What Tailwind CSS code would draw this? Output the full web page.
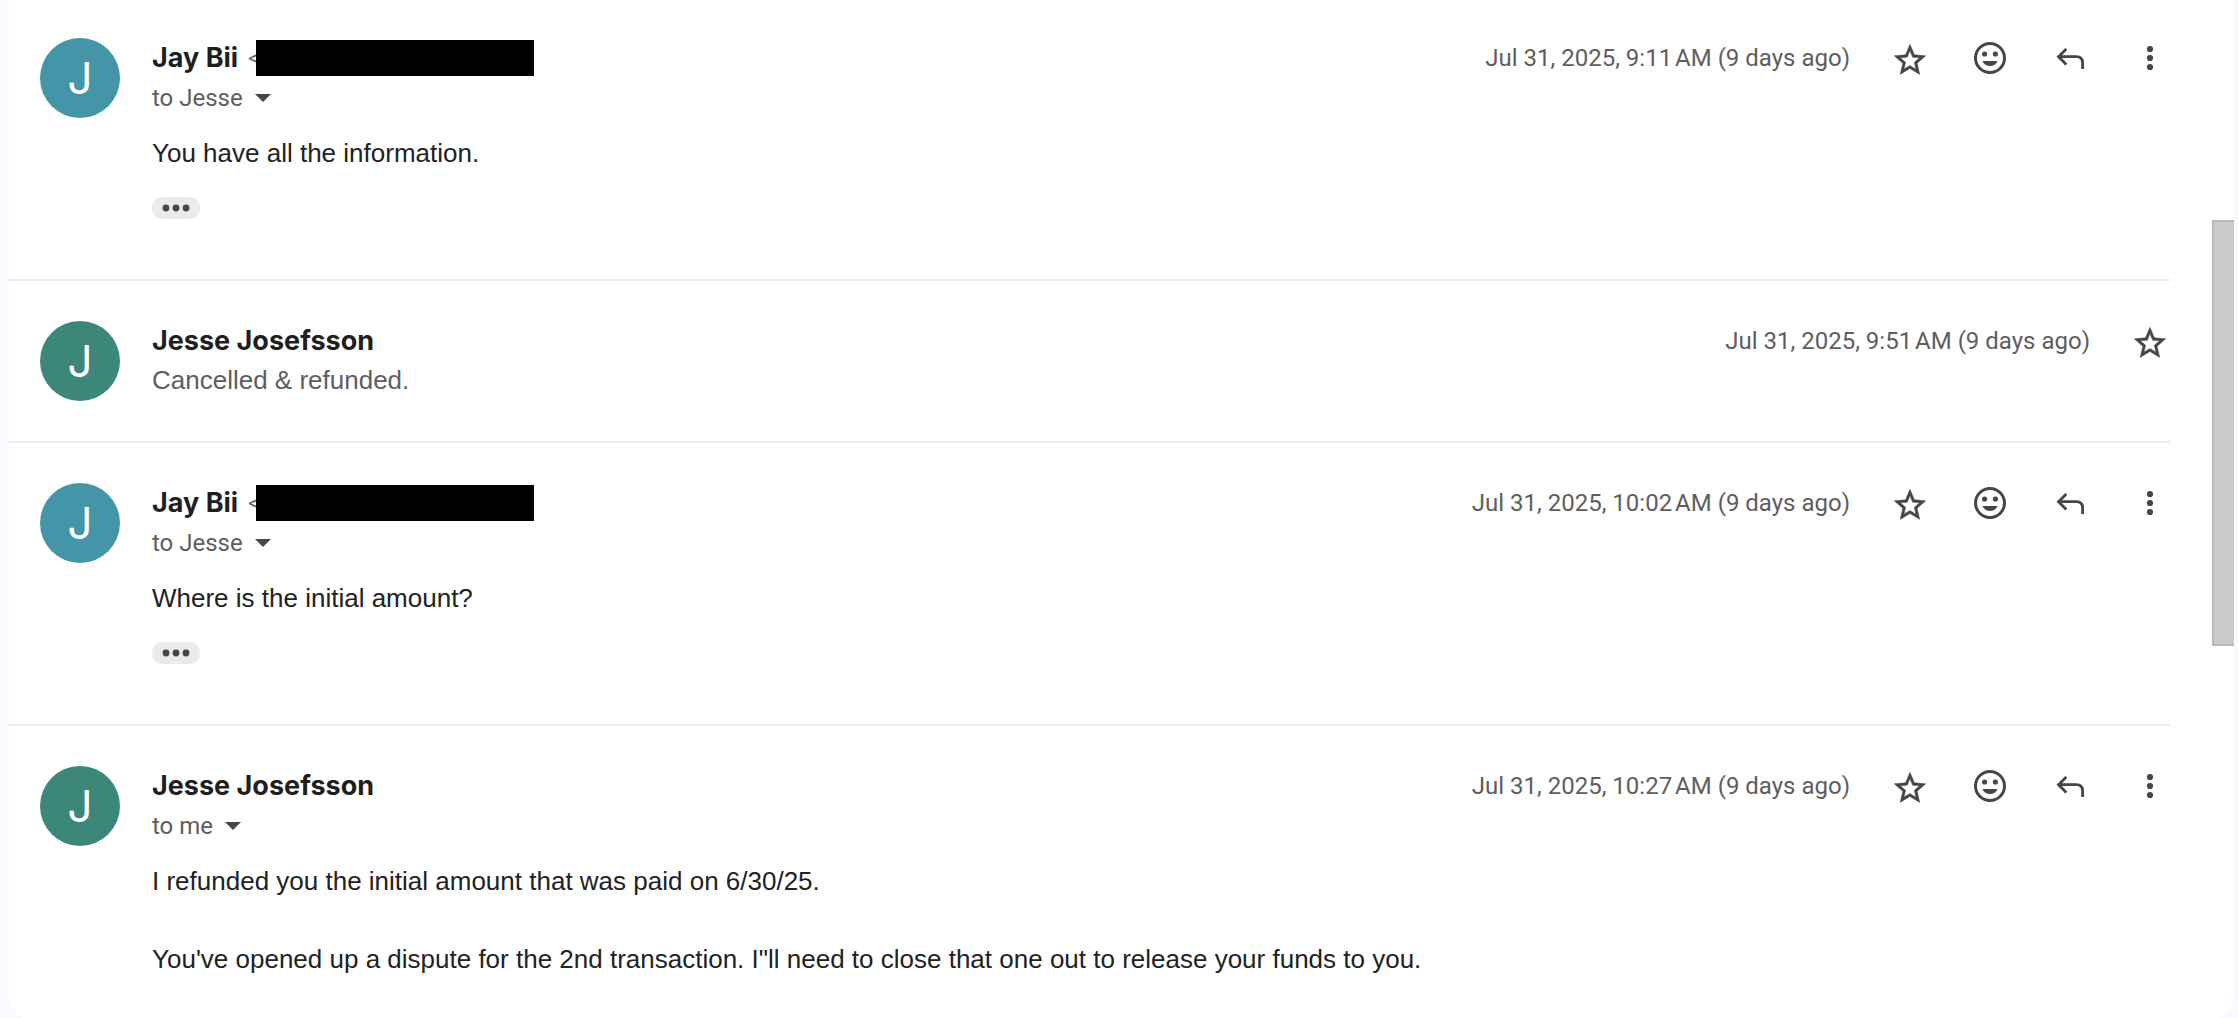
<!DOCTYPE html>
<html lang="en">
<head>
<meta charset="utf-8">
<meta name="viewport" content="width=device-width, initial-scale=1">
<title>Conversation</title>
<script src="https://cdn.jsdelivr.net/npm/@tailwindcss/browser@4"></script>
</head>
<body class="h-screen overflow-hidden bg-[#f8faff] pr-1 pl-2 font-['Roboto',sans-serif] text-[#5e5e5e]">

<svg class="hidden" aria-hidden="true">
  <symbol id="star" viewBox="0 0 40 40"><path transform="translate(1 3.2) scale(1.58)" fill="currentColor" stroke="currentColor" stroke-width=".3" d="M22 9.24l-7.19-.62L12 2 9.19 8.63 2 9.24l5.46 4.73L5.82 21 12 17.27 18.18 21l-1.63-7.03L22 9.24zM12 15.4l-3.76 2.27 1-4.28-3.32-2.88 4.38-.38L12 6.1l1.71 4.04 4.38.38-3.32 2.88 1 4.28L12 15.4z"/></symbol>
  <symbol id="smile" viewBox="0 0 40 40"><circle cx="20" cy="20" r="14.5" fill="none" stroke="currentColor" stroke-width="3"/><circle cx="14.6" cy="16" r="2.6" fill="currentColor"/><circle cx="25.4" cy="16" r="2.6" fill="currentColor"/><path fill="currentColor" d="M12.4 23h15.2c-1.4 3.2-4.2 5-7.6 5s-6.2-1.8-7.6-5z"/></symbol>
  <symbol id="reply" viewBox="0 0 40 40"><path fill="none" stroke="currentColor" stroke-width="2.8" d="M32.6 31v-6q0-6.3-6.3-6.3H9M16.3 10.9 8.5 18.7l7.8 7.8"/></symbol>
  <symbol id="more" viewBox="0 0 40 40"><g fill="currentColor"><circle cx="20" cy="11" r="3.1"/><circle cx="20" cy="20" r="3.1"/><circle cx="20" cy="29" r="3.1"/></g></symbol>
  <symbol id="caret" viewBox="0 0 16 8"><path fill="currentColor" d="M0 0h16L8 8z"/></symbol>
  <symbol id="dots" viewBox="0 0 28 8"><g fill="currentColor"><circle cx="4" cy="4" r="3.4"/><circle cx="14" cy="4" r="3.4"/><circle cx="24" cy="4" r="3.4"/></g></symbol>
</svg>

<div class="flex rounded-b-[32px] bg-white">
  <main class="-mt-0.5 min-w-0 flex-1">

    <article class="flex gap-8 border-b-2 border-[#eeeeee] pt-10 pb-15 pl-8">
      <div class="flex size-20 shrink-0 items-center justify-center rounded-full bg-[#4395a7] font-['Inter',sans-serif] text-[44px] text-white">J</div>
      <div class="min-w-0 flex-1">
        <header>
          <div class="flex h-10 items-center justify-between">
            <div class="flex items-center">
              <h3 class="font-['Inter',sans-serif] text-[27px] font-bold text-[#1f1f1f]">Jay Bii</h3>
              <span class="ml-2.5 text-xl">&lt;</span>
              <span class="z-10 -ml-0.5 h-9 w-[278px] bg-black"></span>
            </div>
            <div class="flex items-center gap-10">
              <time class="text-2xl" datetime="2025-07-31T09:11">Jul 31, 2025, 9:11&#8239;AM (9 days ago)</time>
              <div class="flex gap-10 text-[#444746]">
                <button type="button" aria-label="Star"><svg class="size-10"><use href="#star"/></svg></button>
                <button type="button" aria-label="Add reaction"><svg class="size-10"><use href="#smile"/></svg></button>
                <button type="button" aria-label="Reply"><svg class="size-10"><use href="#reply"/></svg></button>
                <button type="button" aria-label="More"><svg class="size-10"><use href="#more"/></svg></button>
              </div>
            </div>
          </div>
          <button type="button" aria-label="Show details" class="flex h-10 items-center gap-3 text-2xl">to Jesse <svg class="h-2 w-4 text-[#444746]"><use href="#caret"/></svg></button>
        </header>
        <p class="mt-4 font-['Liberation_Sans',sans-serif] text-[26px] leading-[39px] text-[#222222]">You have all the information.</p>
        <button type="button" aria-label="Show trimmed content" class="mt-6 flex h-[22px] w-12 items-center justify-center rounded-full bg-[#e8eaed] text-[#444746]"><svg class="h-2 w-7"><use href="#dots"/></svg></button>
      </div>
    </article>

    <article class="flex gap-8 border-b-2 border-[#eeeeee] py-10 pl-8">
      <div class="flex size-20 shrink-0 items-center justify-center rounded-full bg-[#3c877a] font-['Inter',sans-serif] text-[44px] text-white">J</div>
      <div class="min-w-0 flex-1">
        <div class="flex h-10 items-center justify-between">
          <h3 class="font-['Inter',sans-serif] text-[27px] font-bold text-[#1f1f1f]">Jesse Josefsson</h3>
          <div class="flex items-center gap-10">
            <time class="text-2xl" datetime="2025-07-31T09:51">Jul 31, 2025, 9:51&#8239;AM (9 days ago)</time>
            <button type="button" aria-label="Star" class="text-[#444746]"><svg class="size-10"><use href="#star"/></svg></button>
          </div>
        </div>
        <p class="font-['Liberation_Sans',sans-serif] text-[26px] leading-[39px]">Cancelled &amp; refunded.</p>
      </div>
    </article>

    <article class="flex gap-8 border-b-2 border-[#eeeeee] pt-10 pb-15 pl-8">
      <div class="flex size-20 shrink-0 items-center justify-center rounded-full bg-[#4395a7] font-['Inter',sans-serif] text-[44px] text-white">J</div>
      <div class="min-w-0 flex-1">
        <header>
          <div class="flex h-10 items-center justify-between">
            <div class="flex items-center">
              <h3 class="font-['Inter',sans-serif] text-[27px] font-bold text-[#1f1f1f]">Jay Bii</h3>
              <span class="ml-2.5 text-xl">&lt;</span>
              <span class="z-10 -ml-0.5 h-9 w-[278px] bg-black"></span>
            </div>
            <div class="flex items-center gap-10">
              <time class="text-2xl" datetime="2025-07-31T10:02">Jul 31, 2025, 10:02&#8239;AM (9 days ago)</time>
              <div class="flex gap-10 text-[#444746]">
                <button type="button" aria-label="Star"><svg class="size-10"><use href="#star"/></svg></button>
                <button type="button" aria-label="Add reaction"><svg class="size-10"><use href="#smile"/></svg></button>
                <button type="button" aria-label="Reply"><svg class="size-10"><use href="#reply"/></svg></button>
                <button type="button" aria-label="More"><svg class="size-10"><use href="#more"/></svg></button>
              </div>
            </div>
          </div>
          <button type="button" aria-label="Show details" class="flex h-10 items-center gap-3 text-2xl">to Jesse <svg class="h-2 w-4 text-[#444746]"><use href="#caret"/></svg></button>
        </header>
        <p class="mt-4 font-['Liberation_Sans',sans-serif] text-[26px] leading-[39px] text-[#222222]">Where is the initial amount?</p>
        <button type="button" aria-label="Show trimmed content" class="mt-6 flex h-[22px] w-12 items-center justify-center rounded-full bg-[#e8eaed] text-[#444746]"><svg class="h-2 w-7"><use href="#dots"/></svg></button>
      </div>
    </article>

    <article class="flex gap-8 pt-10 pb-11 pl-8">
      <div class="flex size-20 shrink-0 items-center justify-center rounded-full bg-[#3c877a] font-['Inter',sans-serif] text-[44px] text-white">J</div>
      <div class="min-w-0 flex-1">
        <header>
          <div class="flex h-10 items-center justify-between">
            <h3 class="font-['Inter',sans-serif] text-[27px] font-bold text-[#1f1f1f]">Jesse Josefsson</h3>
            <div class="flex items-center gap-10">
              <time class="text-2xl" datetime="2025-07-31T10:27">Jul 31, 2025, 10:27&#8239;AM (9 days ago)</time>
              <div class="flex gap-10 text-[#444746]">
                <button type="button" aria-label="Star"><svg class="size-10"><use href="#star"/></svg></button>
                <button type="button" aria-label="Add reaction"><svg class="size-10"><use href="#smile"/></svg></button>
                <button type="button" aria-label="Reply"><svg class="size-10"><use href="#reply"/></svg></button>
                <button type="button" aria-label="More"><svg class="size-10"><use href="#more"/></svg></button>
              </div>
            </div>
          </div>
          <button type="button" aria-label="Show details" class="flex h-10 items-center gap-3 text-2xl">to me <svg class="h-2 w-4 text-[#444746]"><use href="#caret"/></svg></button>
        </header>
        <div class="mt-4 space-y-[39px] font-['Liberation_Sans',sans-serif] text-[26px] leading-[39px] text-[#222222]">
          <p>I refunded you the initial amount that was paid on 6/30/25.</p>
          <p>You've opened up a dispute for the 2nd transaction. I"ll need to close that one out to release your funds to you.</p>
        </div>
      </div>
    </article>
  </main>

  <!-- Scrollbar track and thumb -->
  <div class="flex w-16 shrink-0 justify-end pt-55" aria-hidden="true">
    <div class="h-[426px] w-[22px] border-y-2 border-l-2 border-[#b8b8b8] bg-[#cbcbcb]"></div>
  </div>
</div>
</body>
</html>
